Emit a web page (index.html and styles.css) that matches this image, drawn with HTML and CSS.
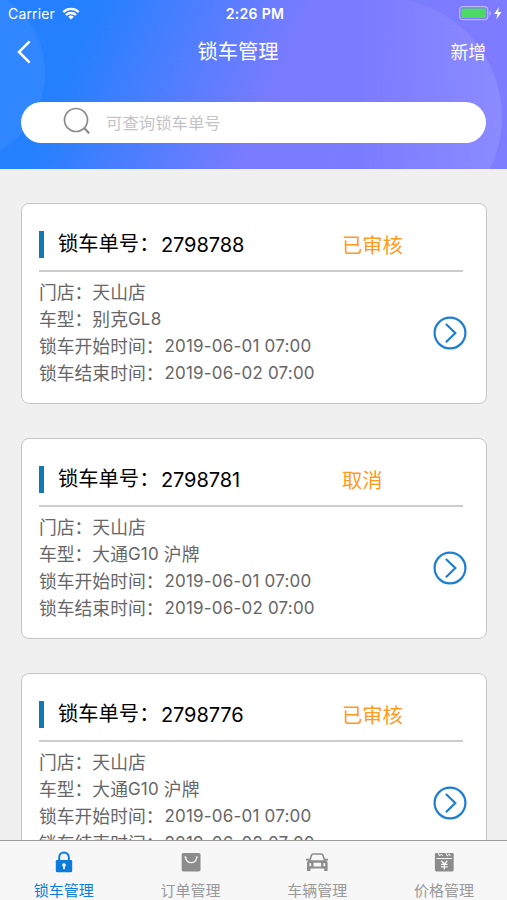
FILE: index.html
```html
<!DOCTYPE html>
<html lang="zh-CN">
<head>
  <meta charset="UTF-8">
  <title>锁车管理</title>
  <meta name="viewport" content="width=device-width,initial-scale=1">
  <link rel="stylesheet" href="styles.css">
</head>
<body>
  <header>
    <svg class="header-bg" viewBox="0 0 507 169" preserveAspectRatio="none">
      <circle cx="-44" cy="73" r="89" fill="#fff" fill-opacity=".06"/>
      <circle cx="383" cy="117" r="119" fill="url(#glow)"/>
      <defs>
        <linearGradient id="glow"><stop offset=".4" stop-color="#fff" stop-opacity="0"/><stop offset="1" stop-color="#fff" stop-opacity=".11"/></linearGradient>
      </defs>
    </svg>
    <div class="status">
      <div class="carrier">
        <span>Carrier</span>
        <svg width="18" height="13" viewBox="0 0 18 13" fill="none" stroke="#fff" stroke-width="2.3">
          <path d="M1.3 5.1a11 11 0 0 1 15.4 0M4 8a7.2 7.2 0 0 1 10 0"/>
          <path d="M9 12.5L6.2 9.8a4 4 0 0 1 5.6 0z" fill="#fff" stroke="none"/>
        </svg>
      </div>
      <div class="clock">2:26 PM</div>
      <div class="power">
        <svg width="43" height="15" viewBox="0 0 43 15">
          <rect x=".7" y=".7" width="28" height="13" rx="3.2" fill="none" stroke="#b9b6fa" stroke-width="1.3"/>
          <rect x="2.5" y="2.4" width="24.4" height="9.6" rx="1.3" fill="#4cd964"/>
          <path d="M30.3 5v4.6q1.6-.6 1.6-2.3T30.3 5z" fill="#b9b6fa"/>
          <path d="M39.8 1L35.2 8h3.2l-1 5.6L42.4 6h-3.3z" fill="#fff"/>
        </svg>
      </div>
    </div>
    <nav>
      <svg class="back" width="14" height="24" viewBox="0 0 14 24" fill="none" stroke="#fff" stroke-width="2.5">
        <path d="M12.6 1.3L2 12l10.6 10.7"/>
      </svg>
      <h1>锁车管理</h1>
      <span class="add">新增</span>
    </nav>
    <div class="search">
      <svg width="28" height="28" viewBox="0 0 28 28" fill="none" stroke="#8c8c8c" stroke-width="1.7">
        <circle cx="13" cy="13" r="11.5"/>
        <path d="M21 21l5.2 5.2" stroke-width="2.3"/>
      </svg>
      <span>可查询锁车单号</span>
    </div>
  </header>

  <svg class="defs">
    <symbol id="arrow" viewBox="0 0 34 34">
      <circle cx="17" cy="17" r="15.4"/>
      <path d="M12.9 8L22.3 17l-9.4 9.2"/>
    </symbol>
  </svg>

  <main>
    <div class="card">
      <div class="card-head">
        <span class="label">锁车单号：</span><span class="num">2798788</span>
        <span class="state">已审核</span>
      </div>
      <div class="card-body">
        <ul>
          <li><span>门店：</span>天山店</li>
          <li><span>车型：</span>别克<b>GL8</b></li>
          <li><span>锁车开始时间：</span><time>2019-06-01 07:00</time></li>
          <li><span>锁车结束时间：</span><time>2019-06-02 07:00</time></li>
        </ul>
        <svg class="go"><use href="#arrow"/></svg>
      </div>
    </div>
    <div class="card">
      <div class="card-head">
        <span class="label">锁车单号：</span><span class="num">2798781</span>
        <span class="state">取消</span>
      </div>
      <div class="card-body">
        <ul>
          <li><span>门店：</span>天山店</li>
          <li><span>车型：</span>大通<b>G10 </b>沪牌</li>
          <li><span>锁车开始时间：</span><time>2019-06-01 07:00</time></li>
          <li><span>锁车结束时间：</span><time>2019-06-02 07:00</time></li>
        </ul>
        <svg class="go"><use href="#arrow"/></svg>
      </div>
    </div>
    <div class="card">
      <div class="card-head">
        <span class="label">锁车单号：</span><span class="num">2798776</span>
        <span class="state">已审核</span>
      </div>
      <div class="card-body">
        <ul>
          <li><span>门店：</span>天山店</li>
          <li><span>车型：</span>大通<b>G10 </b>沪牌</li>
          <li><span>锁车开始时间：</span><time>2019-06-01 07:00</time></li>
          <li><span>锁车结束时间：</span><time>2019-06-02 07:00</time></li>
        </ul>
        <svg class="go"><use href="#arrow"/></svg>
      </div>
    </div>
  </main>

  <footer>
    <div class="tab active">
      <svg viewBox="0 0 22 22">
        <path d="M6.2 10V6.2a4.8 4.8 0 0 1 9.6 0V10" fill="none" stroke="currentColor" stroke-width="2"/>
        <rect x="2.8" y="9" width="16.4" height="12.2" rx="1.2" fill="currentColor"/>
        <path d="M11 12.3a1.8 1.8 0 0 0-.8 3.4v2.5h1.6v-2.5a1.8 1.8 0 0 0-.8-3.4z" fill="#fff"/>
      </svg>
      <span>锁车管理</span>
    </div>
    <div class="tab">
      <svg viewBox="0 0 22 22">
        <rect x="1.7" y="2" width="18.8" height="18.4" rx="1.6" fill="currentColor"/>
        <path d="M5.5 6.3c1 7 10.2 7 11.3 0" fill="none" stroke="#f7f7f7" stroke-width="1.3"/>
        <circle cx="5.5" cy="6.3" r="1" fill="#f7f7f7"/><circle cx="16.8" cy="6.3" r="1" fill="#f7f7f7"/>
      </svg>
      <span>订单管理</span>
    </div>
    <div class="tab">
      <svg viewBox="0 0 22 22">
        <path d="M3.7 10L5.4 4.3Q5.8 3 7.3 3h7.800q1.500 0 1.900 1.300L18.800 10" fill="none" stroke="currentColor" stroke-width="1.6"/>
        <path d="M0 7.7h3.6L3 9.5H0zM22.4 7.7h-3.6l.6 1.8h3zM3 9.2h16.6q2 .8 2 2.8v8h-3.4v-2.4H4.4V20H1v-8q0-2 2-2.8z" fill="currentColor"/>
        <path d="M3.4 12l1.800.3v3l-1.800-.3zM19.200 12l-1.800.3v3l1.800-.3zM7.500 11.800h7.600v3.600H7.500z" fill="#f7f7f7"/>
      </svg>
      <span>车辆管理</span>
    </div>
    <div class="tab">
      <svg viewBox="0 0 22 22">
        <rect x="1.9" y="2" width="18.8" height="18.4" rx="1.3" fill="currentColor"/>
        <path d="M5.500 2l1 3L8.500 3l1 2M13 2l1.200 3L16.300 3l1 2M3.500 7.500h15.600" fill="none" stroke="#f7f7f7" stroke-width="1"/>
        <path d="M8.300 9.700l3 3.300 3-3.300M11.300 13v5.500M8 13.400h6.600M8 15.900h6.600" fill="none" stroke="#f7f7f7" stroke-width="1.3"/>
      </svg>
      <span>价格管理</span>
    </div>
  </footer>
</body>
</html>
```
FILE: styles.css
```css
*{margin:0;padding:0;box-sizing:border-box}
body{font-family:Inter,"Noto Sans CJK SC",sans-serif;background:#f0f0f0;display:flex;flex-direction:column;height:100vh;overflow:hidden}
.defs{display:none}

header{position:relative;height:169px;flex:none;padding:0 21px;color:#fff;background:linear-gradient(113deg,#2580ff 17%,#7a7bff 54%,#7e7cff 100%)}
.header-bg{position:absolute;left:0;top:0;width:100%;height:100%}
.status,nav,.search{position:relative}
.status{display:grid;grid-template-columns:1fr auto 1fr;align-items:center;height:27px;margin:0 -16px 0 -13px;font-size:14px}
.carrier{display:flex;align-items:center;gap:7px;letter-spacing:.15px}
.clock{font-weight:600;letter-spacing:.3px}
.power{display:flex;justify-content:flex-end}
nav{display:grid;grid-template-columns:1fr auto 1fr;align-items:center;height:50px;margin:0 0 0 -4px}
nav h1{font-size:20.3px;font-weight:400;line-height:1;margin-left:-27px;padding-top:1px}
.add{text-align:right;font-size:17.8px;line-height:1;padding-top:1px}
.search{height:41px;margin-top:25px;border-radius:21px;background:#fff;display:flex;align-items:center;padding-left:42px;gap:15px;font-size:16.4px;color:#c4c4c8}
.search svg{margin-top:-3px}
.search span{margin-top:-2px}

main{flex:1;min-height:0;overflow:hidden;padding:34px 20px 0 21px;display:flex;flex-direction:column;gap:34px}
.card{flex:none;height:201px;background:#fff;border:1.5px solid #c6c6c6;border-radius:8px;padding:0 17px}
.card-head{position:relative;display:flex;align-items:center;height:68px;margin-right:6px;padding:15px 0 0 19px;border-bottom:2px solid #ccc;line-height:1}
.card-head::before{content:"";position:absolute;left:0;top:27px;width:5px;height:27px;background:#0f7ab5}
.label{width:103px;font-size:20.3px;white-space:nowrap}
.num{width:181px;font-size:20px;letter-spacing:-.1px;padding-top:1px}
.state{font-size:20.3px;color:#ff9a1c;padding-top:3px}
.card-body{display:flex;justify-content:space-between}
ul{list-style:none;padding-top:7px;font-size:17.8px;color:#666}
li{display:flex;align-items:center;height:27px;line-height:27px;white-space:pre}
li b{font-weight:400;font-size:17px;letter-spacing:.2px}
time{font-size:17px;letter-spacing:.2px;padding-left:1px}
.go{width:34px;height:34px;margin:44px 2px 0 0;fill:none;stroke:#1c7fd2;stroke-width:2.2}

footer{flex:none;height:60px;display:grid;grid-template-columns:repeat(4,1fr);background:#f7f7f7;border-top:1px solid #999}
.tab{display:flex;flex-direction:column;align-items:center;padding:10px 0 0 1px;color:#8c8c8c;font-size:15px}
.tab svg{width:22px;height:22px}
.tab span{line-height:20px;margin-top:8px;color:#999}
.active,.active span{color:#0c7bdc}
```
